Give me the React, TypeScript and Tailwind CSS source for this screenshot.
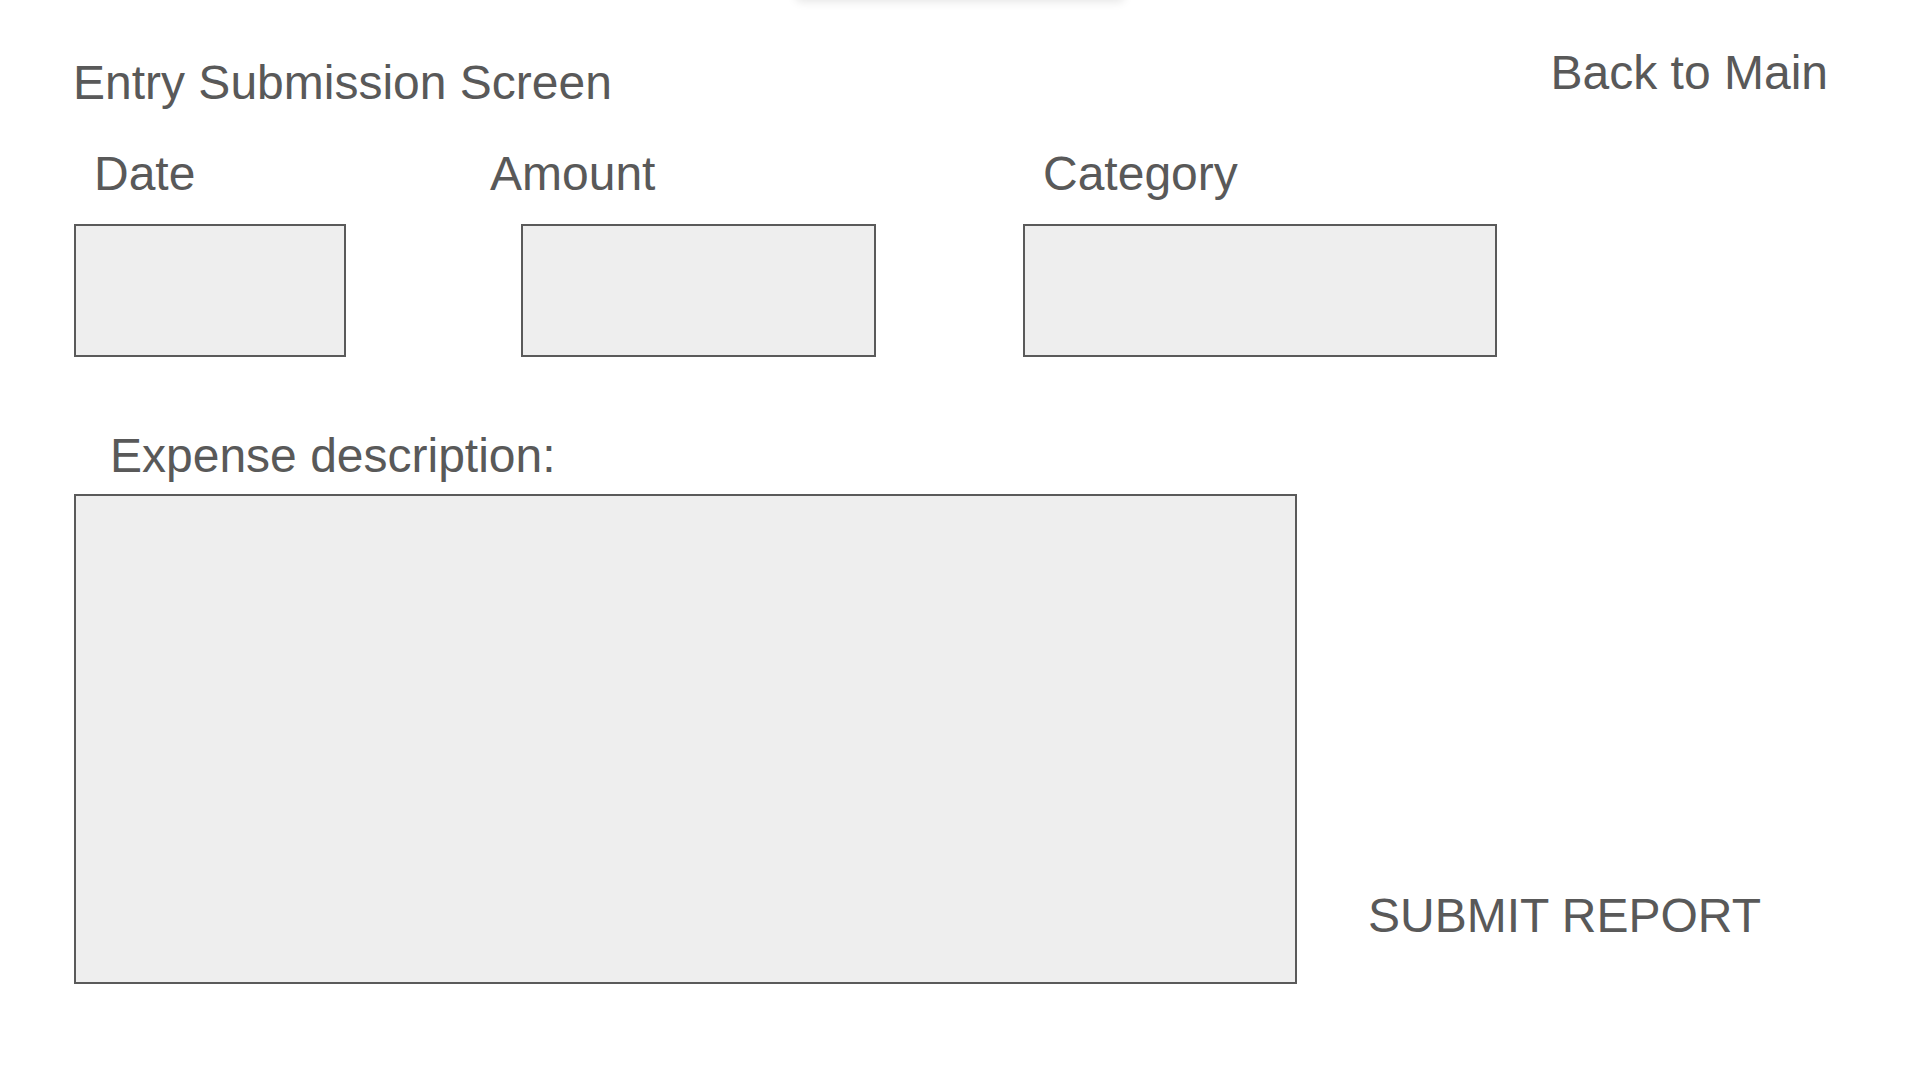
import React from 'react';

const label = "text-[48px] leading-[48px] whitespace-nowrap";
const field = "h-[133px] bg-[#eeeeee] border-2 border-[#5a5a5a]";

export default function App() {
    return (
        <div className="relative w-full h-[1080px] overflow-hidden bg-white text-[#595959] font-['Liberation_Sans',Arial,sans-serif]">
            {/* faint shadow of a bar sitting just above the viewport */}
            <div className="absolute -top-[14px] left-1/2 -translate-x-1/2 w-[330px] h-[14px] rounded-full bg-white shadow-[0_2px_10px_rgba(0,0,0,0.10)]" />

            <div className="flex items-start">
                <h1 className={`${label} ml-[73px] mt-[59px] font-normal`}>Entry Submission Screen</h1>
                <button className={`${label} ml-auto mr-[92px] mt-[49px]`}>Back to Main</button>
            </div>

            <div className="flex mt-[43px] ml-[74px]">
                <div className="flex flex-col w-[272px]">
                    <span className={`${label} ml-[20px]`}>Date</span>
                    <div className={`${field} mt-[26px]`} />
                </div>
                <div className="flex flex-col w-[355px] ml-[175px]">
                    <span className={`${label} -ml-[31px]`}>Amount</span>
                    <div className={`${field} mt-[26px]`} />
                </div>
                <div className="flex flex-col w-[474px] ml-[147px]">
                    <span className={`${label} ml-[20px]`}>Category</span>
                    <div className={`${field} mt-[26px]`} />
                </div>
            </div>

            <div className="ml-[74px] mt-[75px]">
                <span className={`${label} block ml-[36px]`}>Expense description:</span>
                <div className="flex items-start mt-[14px]">
                    <div className="w-[1223px] h-[490px] bg-[#eeeeee] border-2 border-[#5a5a5a]" />
                    <button className={`${label} ml-[71px] mt-[398px]`}>SUBMIT REPORT</button>
                </div>
            </div>
        </div>
    );
}
